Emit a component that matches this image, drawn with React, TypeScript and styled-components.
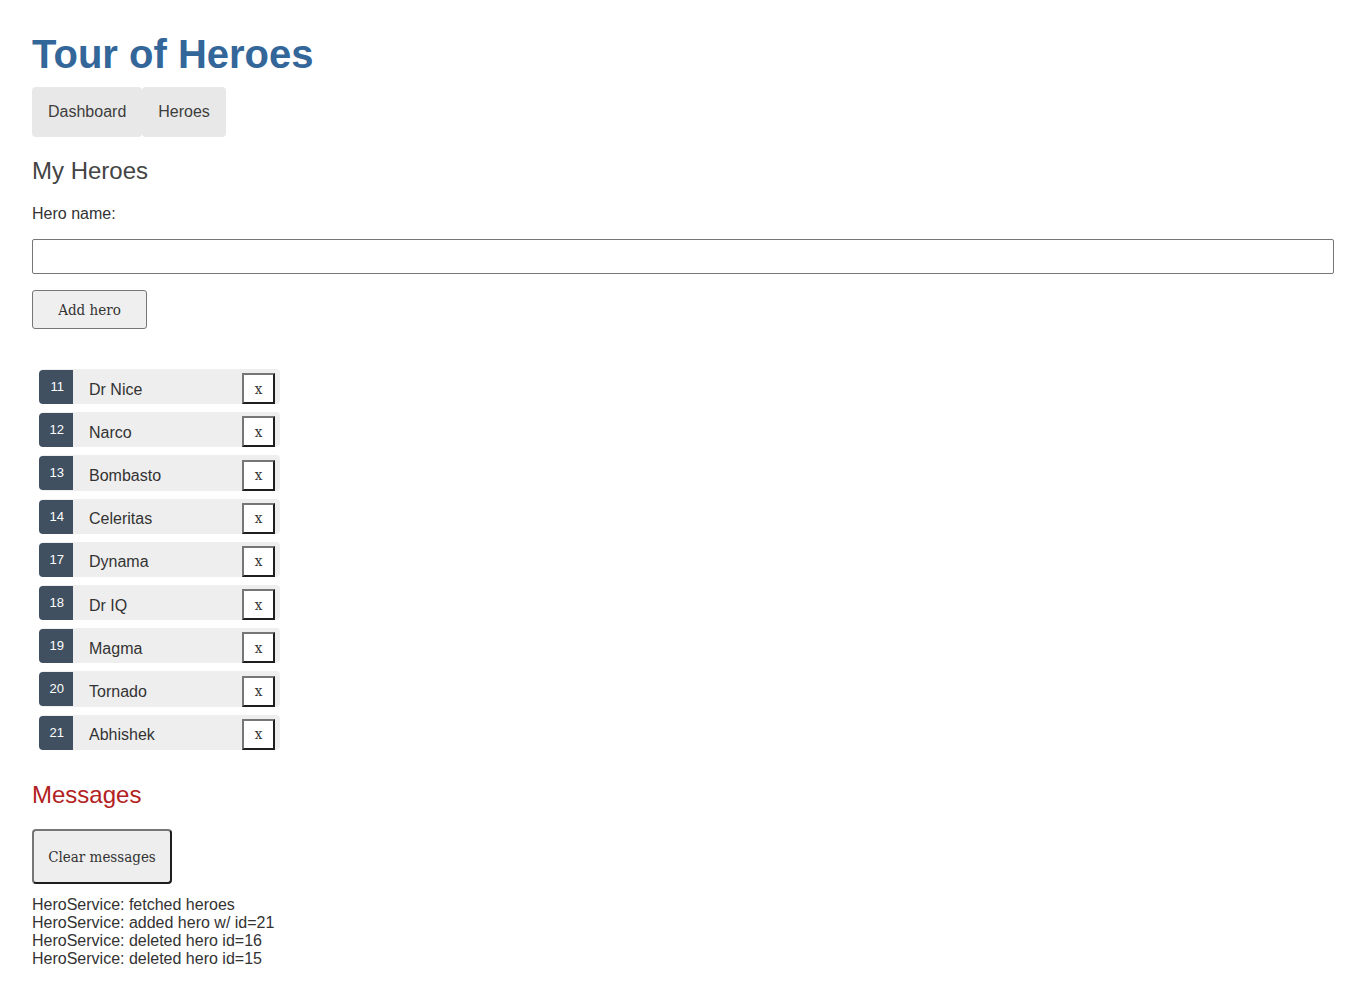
import React from "react";
import styled, { createGlobalStyle } from "styled-components";

const GlobalStyle = createGlobalStyle`
  html, body { margin: 0; padding: 0; background: #fff; }
  body {
    color: #333;
    font-family: "Liberation Sans", Arial, Helvetica, sans-serif;
    font-size: 16px;
  }
`;

const serif = `"DejaVu Serif Condensed", "DejaVu Serif", serif`;

const Page = styled.div`
  display: flex;
  flex-direction: column;
  align-items: flex-start;
  padding: 32px;
`;

const Title = styled.h1`
  margin: 0;
  color: #336699;
  font-family: "Liberation Sans", Arial, sans-serif;
  font-size: 40px;
  font-weight: bold;
  line-height: normal;
`;

const Nav = styled.nav`
  display: flex;
  margin-top: 10px;
`;

const NavLink = styled.a`
  display: block;
  padding: 16px;
  line-height: 18px;
  font-size: 16px;
  background-color: #e8e8e8;
  color: #3d3d3d;
  border-radius: 4px;
  text-decoration: none;
  cursor: pointer;
`;

const Heading = styled.h2<{ $tone?: "default" | "alert" }>`
  margin: 20px 0;
  font-family: "Liberation Sans", Arial, sans-serif;
  font-size: 24px;
  font-weight: normal;
  line-height: normal;
  color: ${(p) => (p.$tone === "alert" ? "#b22222" : "#444")};
`;

const Label = styled.label`
  display: block;
  font-size: 16px;
  line-height: normal;
  color: #333;
`;

const NameInput = styled.input`
  align-self: stretch;
  box-sizing: border-box;
  margin-top: 16px;
  height: 35px;
  padding: 8px;
  border: 1px solid #767676;
  border-radius: 2px;
  background: #fff;
  font-family: ${serif};
  font-size: 15px;
`;

const AddButton = styled.button`
  box-sizing: border-box;
  margin-top: 16px;
  width: 115px;
  height: 39px;
  padding: 0;
  border: 1px solid #767676;
  border-radius: 3px;
  background: #efefef;
  color: #333;
  font-family: ${serif};
  font-size: 15px;
  cursor: pointer;
`;

const HeroList = styled.ul`
  display: flex;
  flex-direction: column;
  gap: 8px;
  list-style: none;
  margin: 40px 0 0 8px;
  padding: 0;
  width: 240px;
`;

const HeroRow = styled.li`
  display: flex;
  align-items: center;
  height: 35.2px;
  background-color: #eee;
  border-radius: 4px;
  cursor: pointer;
`;

const Badge = styled.span`
  align-self: flex-start;
  box-sizing: border-box;
  margin: 1px 0 0 -1px;
  width: 34px;
  height: 34px;
  padding: 10px 9px 0 9px;
  font-size: 13px;
  line-height: 13px;
  text-align: right;
  color: #fff;
  background-color: #405061;
  border-radius: 4px 0 0 4px;
`;

const HeroName = styled.span`
  flex: 1;
  margin: 6px 0 0 16px;
  font-size: 16px;
  line-height: normal;
  color: #333;
`;

const DeleteButton = styled.button`
  align-self: flex-end;
  box-sizing: border-box;
  width: 33px;
  height: 31px;
  margin-right: 5px;
  padding: 0;
  background: #fff;
  color: #333;
  border-style: solid;
  border-width: 2px;
  border-color: #767676 #1e1e1e #1e1e1e #767676;
  font-family: ${serif};
  font-size: 15px;
  cursor: pointer;
`;

const ClearButton = styled.button`
  box-sizing: border-box;
  width: 140px;
  height: 55px;
  padding: 0;
  background: #eee;
  color: #333;
  border-style: solid;
  border-width: 2px;
  border-color: #767676 #1e1e1e #1e1e1e #767676;
  border-radius: 4px;
  font-family: ${serif};
  font-size: 15px;
  cursor: pointer;
`;

const Log = styled.div`
  margin-top: 12px;
  font-size: 16px;
  line-height: 18px;
  color: #333;
`;

const MessagesHeading = styled(Heading)`
  margin-top: 31.5px;
`;

const heroes = [
  { id: 11, name: "Dr Nice" },
  { id: 12, name: "Narco" },
  { id: 13, name: "Bombasto" },
  { id: 14, name: "Celeritas" },
  { id: 17, name: "Dynama" },
  { id: 18, name: "Dr IQ" },
  { id: 19, name: "Magma" },
  { id: 20, name: "Tornado" },
  { id: 21, name: "Abhishek" },
];

const messages = [
  "HeroService: fetched heroes",
  "HeroService: added hero w/ id=21",
  "HeroService: deleted hero id=16",
  "HeroService: deleted hero id=15",
];

export default function App() {
  return (
    <>
      <GlobalStyle />
      <Page>
        <Title>Tour of Heroes</Title>
        <Nav>
          <NavLink>Dashboard</NavLink>
          <NavLink>Heroes</NavLink>
        </Nav>
        <Heading>My Heroes</Heading>
        <Label htmlFor="new-hero">Hero name:</Label>
        <NameInput id="new-hero" />
        <AddButton type="button">Add hero</AddButton>
        <HeroList>
          {heroes.map((h) => (
            <HeroRow key={h.id}>
              <Badge>{h.id}</Badge>
              <HeroName>{h.name}</HeroName>
              <DeleteButton type="button" title="delete hero">
                x
              </DeleteButton>
            </HeroRow>
          ))}
        </HeroList>
        <MessagesHeading $tone="alert">Messages</MessagesHeading>
        <ClearButton type="button">Clear messages</ClearButton>
        <Log>
          {messages.map((m, i) => (
            <div key={i}>{m}</div>
          ))}
        </Log>
      </Page>
    </>
  );
}
